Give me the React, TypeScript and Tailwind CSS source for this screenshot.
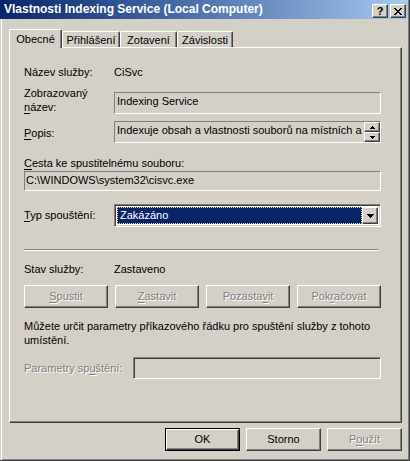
import type { ReactNode } from "react";

const raised =
  "bg-[#d4d0c8] border border-t-white border-l-white border-r-[#404040] border-b-[#404040] shadow-[inset_-1px_-1px_#808080]";
const staticEdge = "border border-t-[#808080] border-l-[#808080] border-r-white border-b-white";
const sunken =
  "border border-t-[#808080] border-l-[#808080] border-r-white border-b-white shadow-[inset_1px_1px_#404040,inset_-1px_-1px_#d4d0c8]";
const disabledText = "text-[#808080] [text-shadow:1px_1px_0_#fff]";

const U = ({ children }: { children: ReactNode }) => (
  <span className="underline underline-offset-[2px]">{children}</span>
);

const Arrow = ({ up = false, small = false }: { up?: boolean; small?: boolean }) => (
  <svg width={small ? 5 : 7} height={small ? 3 : 4} viewBox={small ? "0 0 5 3" : "0 0 7 4"}>
    {small ? (
      <path d={up ? "M2 0h1v1h1v1h1v1H0V2h1V1h1z" : "M0 0h5v1H4v1H3v1H2V2H1V1H0z"} fill="#000" />
    ) : (
      <path d={up ? "M3 0h1v1h1v1h1v1h1v1H0V3h1V2h1V1h1z" : "M0 0h7v1H6v1H5v1H4v1H3V3H2V2H1V1H0z"} fill="#000" />
    )}
  </svg>
);

const Button = ({ children, disabled = false, isDefault = false, className = "" }: { children: ReactNode; disabled?: boolean; isDefault?: boolean; className?: string }) => (
  <div className={`${isDefault ? "border border-black" : ""} ${className}`}>
    <div className={`${raised} h-full flex items-center justify-center ${disabled ? disabledText : ""}`}>{children}</div>
  </div>
);

const Tab = ({ label, active = false, w }: { label: string; active?: boolean; w: string }) =>
  active ? (
    <div className={`${w} h-[19px] relative z-10 bg-[#d4d0c8] border-l border-t border-white border-r border-r-[#404040] shadow-[inset_-1px_0_#808080] rounded-t-[2px] flex items-center justify-center`}>
      {label}
    </div>
  ) : (
    <div className={`${w} h-[16px] mb-px bg-[#d4d0c8] border-l border-t border-white border-r border-r-[#404040] shadow-[inset_-1px_0_#808080] rounded-t-[2px] flex items-center justify-center pt-px`}>
      {label}
    </div>
  );

export default function App() {
  return (
    <div className="w-[410px] h-[461px] bg-[#d4d0c8] border-r border-b border-[#404040] shadow-[inset_1px_0_#d4d0c8,inset_2px_0_#fff,inset_-1px_-1px_#808080] font-['Liberation_Sans',Arial,sans-serif] text-[11px] leading-[13px] text-black flex flex-col select-none">
      {/* Title bar */}
      <div className="h-[19px] mr-px bg-linear-to-r from-[#0a246a] to-[#a6caf0] flex items-start pl-[4px] pr-[2px]">
        <div className="flex-1 mt-[3px] text-white font-bold text-[12px] leading-[13px] whitespace-nowrap">
          Vlastnosti Indexing Service (Local Computer)
        </div>
        <div className="flex gap-[2px] mt-[4px]">
          <div className={`${raised} w-[16px] h-[14px] flex items-center justify-center font-bold text-[11px] leading-none`}>?</div>
          <div className={`${raised} w-[16px] h-[14px] flex items-center justify-center`}>
            <svg width="8" height="7" viewBox="0 0 8 7">
              <path d="M0 0h2v1h1v1h2V1h1V0h2v1H7v1H6v1H5v1h1v1h1v1h1v1H6V6H5V5H3v1H2v1H0V6h1V5h1V4h1V3H2V2H1V1H0z" fill="#000" />
            </svg>
          </div>
        </div>
      </div>

      {/* Body */}
      <div className="flex-1 flex flex-col pl-[9px] pr-[7px] pt-[10px]">
        <div className="h-[19px] flex items-end">
          <Tab label="Obecné" active w="w-[53px]" />
          <Tab label="Přihlášení" w="w-[58px]" />
          <Tab label="Zotavení" w="w-[57px]" />
          <Tab label="Závislosti" w="w-[56px]" />
        </div>

        <div className="-mt-px h-[376px] border-l border-t border-white border-r border-b border-r-[#404040] border-b-[#404040] shadow-[inset_-1px_-1px_#808080] flex flex-col pl-[14px] pt-[13px]">
          <div className="h-[22px] flex items-center">
            <div className="w-[90px]">Název služby:</div>
            <div>CiSvc</div>
          </div>

          <div className="mt-[9px] h-[22px] flex items-start">
            <div className="w-[90px] -mt-[6px] leading-[14px]">
              Zobrazovaný
              <br />
              <U>n</U>ázev:
            </div>
            <div className={`${staticEdge} w-[267px] h-[22px] pl-[2px] pt-[2px]`}>Indexing Service</div>
          </div>

          <div className="mt-[7px] h-[22px] flex items-center">
            <div className="w-[90px] pt-[2px]">
              <U>P</U>opis:
            </div>
            <div className={`${staticEdge} w-[267px] h-[22px] flex`}>
              <div className="flex-1 pl-[2px] pt-[2px] whitespace-nowrap overflow-hidden">
                Indexuje obsah a vlastnosti souborů na místních a
              </div>
              <div className="w-[16px] flex flex-col">
                <div className={`${raised} h-[10px] flex items-center justify-center`}>
                  <Arrow up small />
                </div>
                <div className={`${raised} h-[10px] flex items-center justify-center`}>
                  <Arrow small />
                </div>
              </div>
            </div>
          </div>

          <div className="mt-[13px] h-[14px] leading-[14px]">
            <U>C</U>esta ke spustitelnému souboru:
          </div>
          <div className={`${staticEdge} mt-px w-[357px] h-[20px] pl-[1px] pt-[2px]`}>C:\WINDOWS\system32\cisvc.exe</div>

          <div className="mt-[13px] h-[23px] flex items-center">
            <div className="w-[90px]">
              <U>T</U>yp spouštění:
            </div>
            <div className={`${sunken} w-[267px] h-[23px] bg-white p-[2px] flex`}>
              <div className="flex-1 bg-[#0a246a] border border-dotted border-[#e8e4a0] text-white pl-[2px] flex items-center">Zakázáno</div>
              <div className={`${raised} w-[16px] flex items-center justify-center`}>
                <Arrow />
              </div>
            </div>
          </div>

          <div className="mt-[22px] w-[354px] h-[2px] border-t border-[#808080] border-b border-b-white" />

          <div className="mt-[11px] h-[14px] flex items-center">
            <div className="w-[90px]">Stav služby:</div>
            <div>Zastaveno</div>
          </div>

          <div className="mt-[9px] w-[357px] h-[23px] grid grid-cols-4 gap-[7px]">
            <Button disabled>
              <U>S</U>pustit
            </Button>
            <Button disabled>
              <U>Z</U>astavit
            </Button>
            <Button disabled>
              Pozasta<U>v</U>it
            </Button>
            <Button disabled>
              Pok<U>r</U>ačovat
            </Button>
          </div>

          <div className="mt-[11px] leading-[14px]">
            Můžete určit parametry příkazového řádku pro spuštění služby z tohoto
            <br />
            umístění.
          </div>

          <div className="mt-[10px] h-[22px] flex items-center">
            <div className={`w-[109px] ${disabledText}`}>
              Parametry sp<U>u</U>štění:
            </div>
            <div className={`${sunken} w-[248px] h-[22px]`} />
          </div>
        </div>

        <div className="mt-[5px] flex justify-end gap-[6px]">
          <Button isDefault className="w-[75px] h-[23px]">
            OK
          </Button>
          <Button className="w-[75px] h-[23px]">Storno</Button>
          <Button disabled className="w-[75px] h-[23px]">
            P<U>o</U>užít
          </Button>
        </div>
      </div>
    </div>
  );
}
